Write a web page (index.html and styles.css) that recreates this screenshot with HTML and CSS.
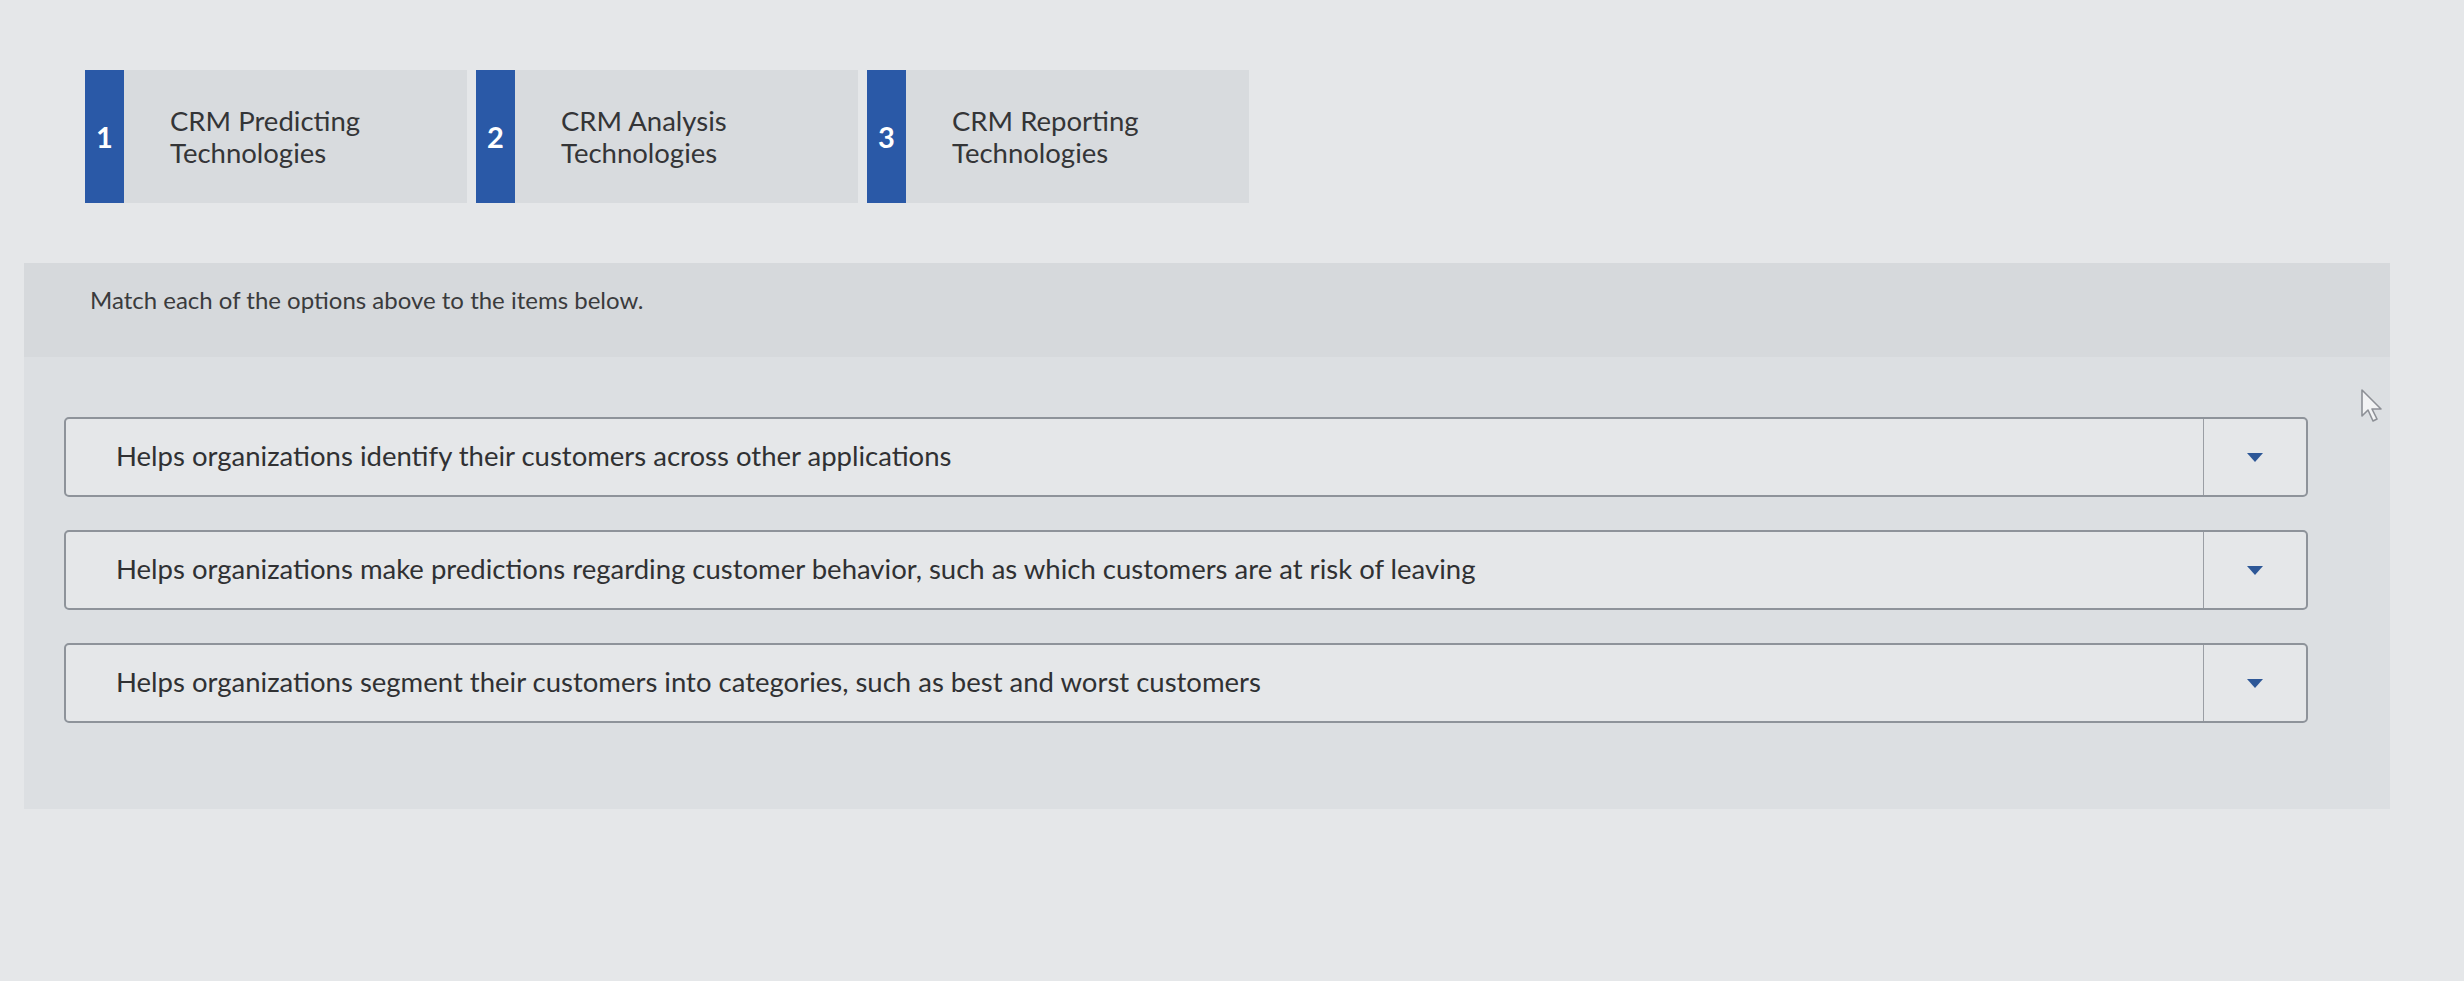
FILE: index.html
```html
<!DOCTYPE html>
<html lang="en">
<head>
<meta charset="utf-8">
<title>Matching</title>
<link rel="stylesheet" href="styles.css">
</head>
<body>
<div class="page">
  <div class="tabs">
    <div class="tab"><div class="num">1</div><div class="label">CRM Predicting<br>Technologies</div></div>
    <div class="tab"><div class="num">2</div><div class="label">CRM Analysis<br>Technologies</div></div>
    <div class="tab"><div class="num">3</div><div class="label">CRM Reporting<br>Technologies</div></div>
  </div>
  <div class="panel">
    <div class="panel-head">Match each of the options above to the items below.</div>
    <div class="rows">
      <div class="row"><div class="row-text">Helps organizations identify their customers across other applications</div><div class="drop"><span class="tri"></span></div></div>
      <div class="row"><div class="row-text">Helps organizations make predictions regarding customer behavior, such as which customers are at risk of leaving</div><div class="drop"><span class="tri"></span></div></div>
      <div class="row"><div class="row-text">Helps organizations segment their customers into categories, such as best and worst customers</div><div class="drop"><span class="tri"></span></div></div>
    </div>
  </div>
  <svg class="cursor" width="26" height="36" viewBox="0 0 26 36"><path d="M2 2 L2 28 L8 22 L13 33 L17 31 L12 21 L21 21 Z" fill="#f2f3f4" stroke="#8d9096" stroke-width="1.6" stroke-linejoin="round"/></svg>
</div>
</body>
</html>
```
FILE: styles.css
```css
html, body {
  margin: 0;
  padding: 0;
}
body {
  background: #e5e7e9;
  font-family: Lato, "Open Sans", "Liberation Sans", sans-serif;
  color: #343537;
  width: 2464px;
  height: 981px;
  overflow: hidden;
}
.page {
  position: relative;
  padding: 70px 0 0 0;
}
.tabs {
  display: flex;
  gap: 9px;
  margin-left: 85px;
}
.tab {
  display: flex;
  width: 382px;
  height: 133px;
  background: #d8dbde;
}
.num {
  width: 39px;
  background: #2a59a7;
  color: #fff;
  font-weight: 700;
  font-size: 29px;
  display: flex;
  align-items: center;
  justify-content: center;
}
.label {
  display: flex;
  align-items: center;
  padding-left: 46px;
  font-size: 27.5px;
  line-height: 32px;
  color: #343537;
}
.panel {
  margin: 60px 0 0 24px;
  width: 2366px;
  background: #dcdfe2;
  padding-bottom: 86px;
}
.panel-head {
  background: #d6d9dc;
  height: 94px;
  padding-left: 66px;
  padding-top: 22px;
  box-sizing: border-box;
  font-size: 24px;
  color: #3a3b3d;
}
.rows {
  display: flex;
  flex-direction: column;
  gap: 33px;
  padding: 60px 0 0 40px;
}
.row {
  display: flex;
  width: 2244px;
  height: 80px;
  box-sizing: border-box;
  border: 2px solid #8e939a;
  border-radius: 5px;
  background: #e5e7e9;
}
.row-text {
  flex: 1;
  display: flex;
  align-items: center;
  padding-left: 50px;
  padding-bottom: 4px;
  font-size: 27.5px;
  color: #303133;
}
.drop {
  width: 102px;
  border-left: 1.5px solid #9a9ea4;
  display: flex;
  align-items: center;
  justify-content: center;
}
.tri {
  width: 0;
  height: 0;
  border-left: 8px solid transparent;
  border-right: 8px solid transparent;
  border-top: 9px solid #2d5797;
}
.cursor {
  position: absolute;
  left: 2360px;
  top: 388px;
}
```
